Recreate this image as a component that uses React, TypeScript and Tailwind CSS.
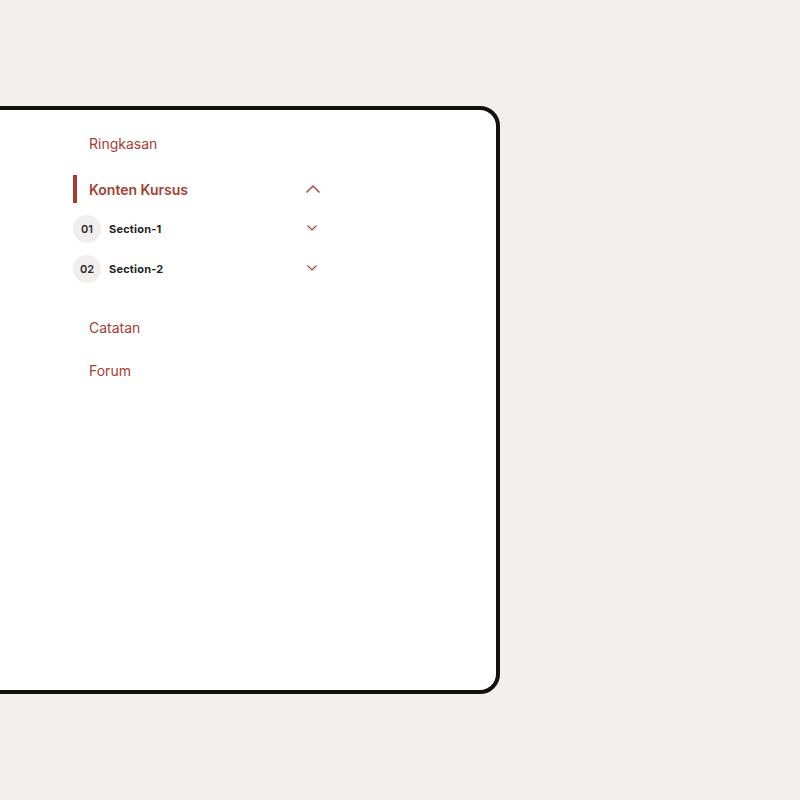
import React from "react";

const ChevronUp = () => (
  <svg width="16" height="10" viewBox="0 0 16 10" fill="none">
    <path d="M1.5 8.5 L8 2 L14.5 8.5" stroke="#a63d32" strokeWidth="1.4" />
  </svg>
);

const ChevronDown = () => (
  <svg width="12" height="8" viewBox="0 0 12 8" fill="none">
    <path d="M1.5 1.5 L6 6 L10.5 1.5" stroke="#a63d32" strokeWidth="1.1" />
  </svg>
);

const Section = ({ num, label }: { num: string; label: string }) => (
  <div className="flex h-[28px] items-center justify-between">
    <div className="flex items-center gap-[8px]">
      <div className="flex h-[28px] w-[28px] items-center justify-center rounded-full bg-[#f0efed] text-[11px] font-semibold text-[#2a2a2a]">
        {num}
      </div>
      <span className="text-[11px] font-bold tracking-[0.2px] text-[#1f1f1f]">{label}</span>
    </div>
    <div className="mb-[3px] mr-[1px] flex w-[16px] justify-center">
      <ChevronDown />
    </div>
  </div>
);

export default function App() {
  return (
    <div
      className="h-[800px] w-[800px] overflow-hidden bg-[#f1f0ee] pt-[106px]"
      style={{ fontFamily: "Inter, 'Noto Sans', sans-serif" }}
    >
      <div className="ml-[-24px] h-[588px] w-[524px] rounded-[20px] border-4 border-[#111] bg-white pl-[93px]">
        <div className="w-[248px]">
          <div className="mt-[24px] pl-[16px] text-[14px] leading-[20px] text-[#a63d32]">
            Ringkasan
          </div>
          <div className="mt-[21px] flex h-[28px] items-center justify-between border-l-4 border-[#a63d32] pl-[12px]">
            <span className="text-[14px] font-semibold text-[#a63d32]">Konten Kursus</span>
            <ChevronUp />
          </div>
          <div className="mt-[12px] flex flex-col gap-[12px]">
            <Section num="01" label="Section-1" />
            <Section num="02" label="Section-2" />
          </div>
          <div className="mt-[35px] pl-[16px] text-[14px] leading-[20px] text-[#a63d32]">
            Catatan
          </div>
          <div className="mt-[23px] pl-[16px] text-[14px] leading-[20px] text-[#a63d32]">
            Forum
          </div>
        </div>
      </div>
    </div>
  );
}
